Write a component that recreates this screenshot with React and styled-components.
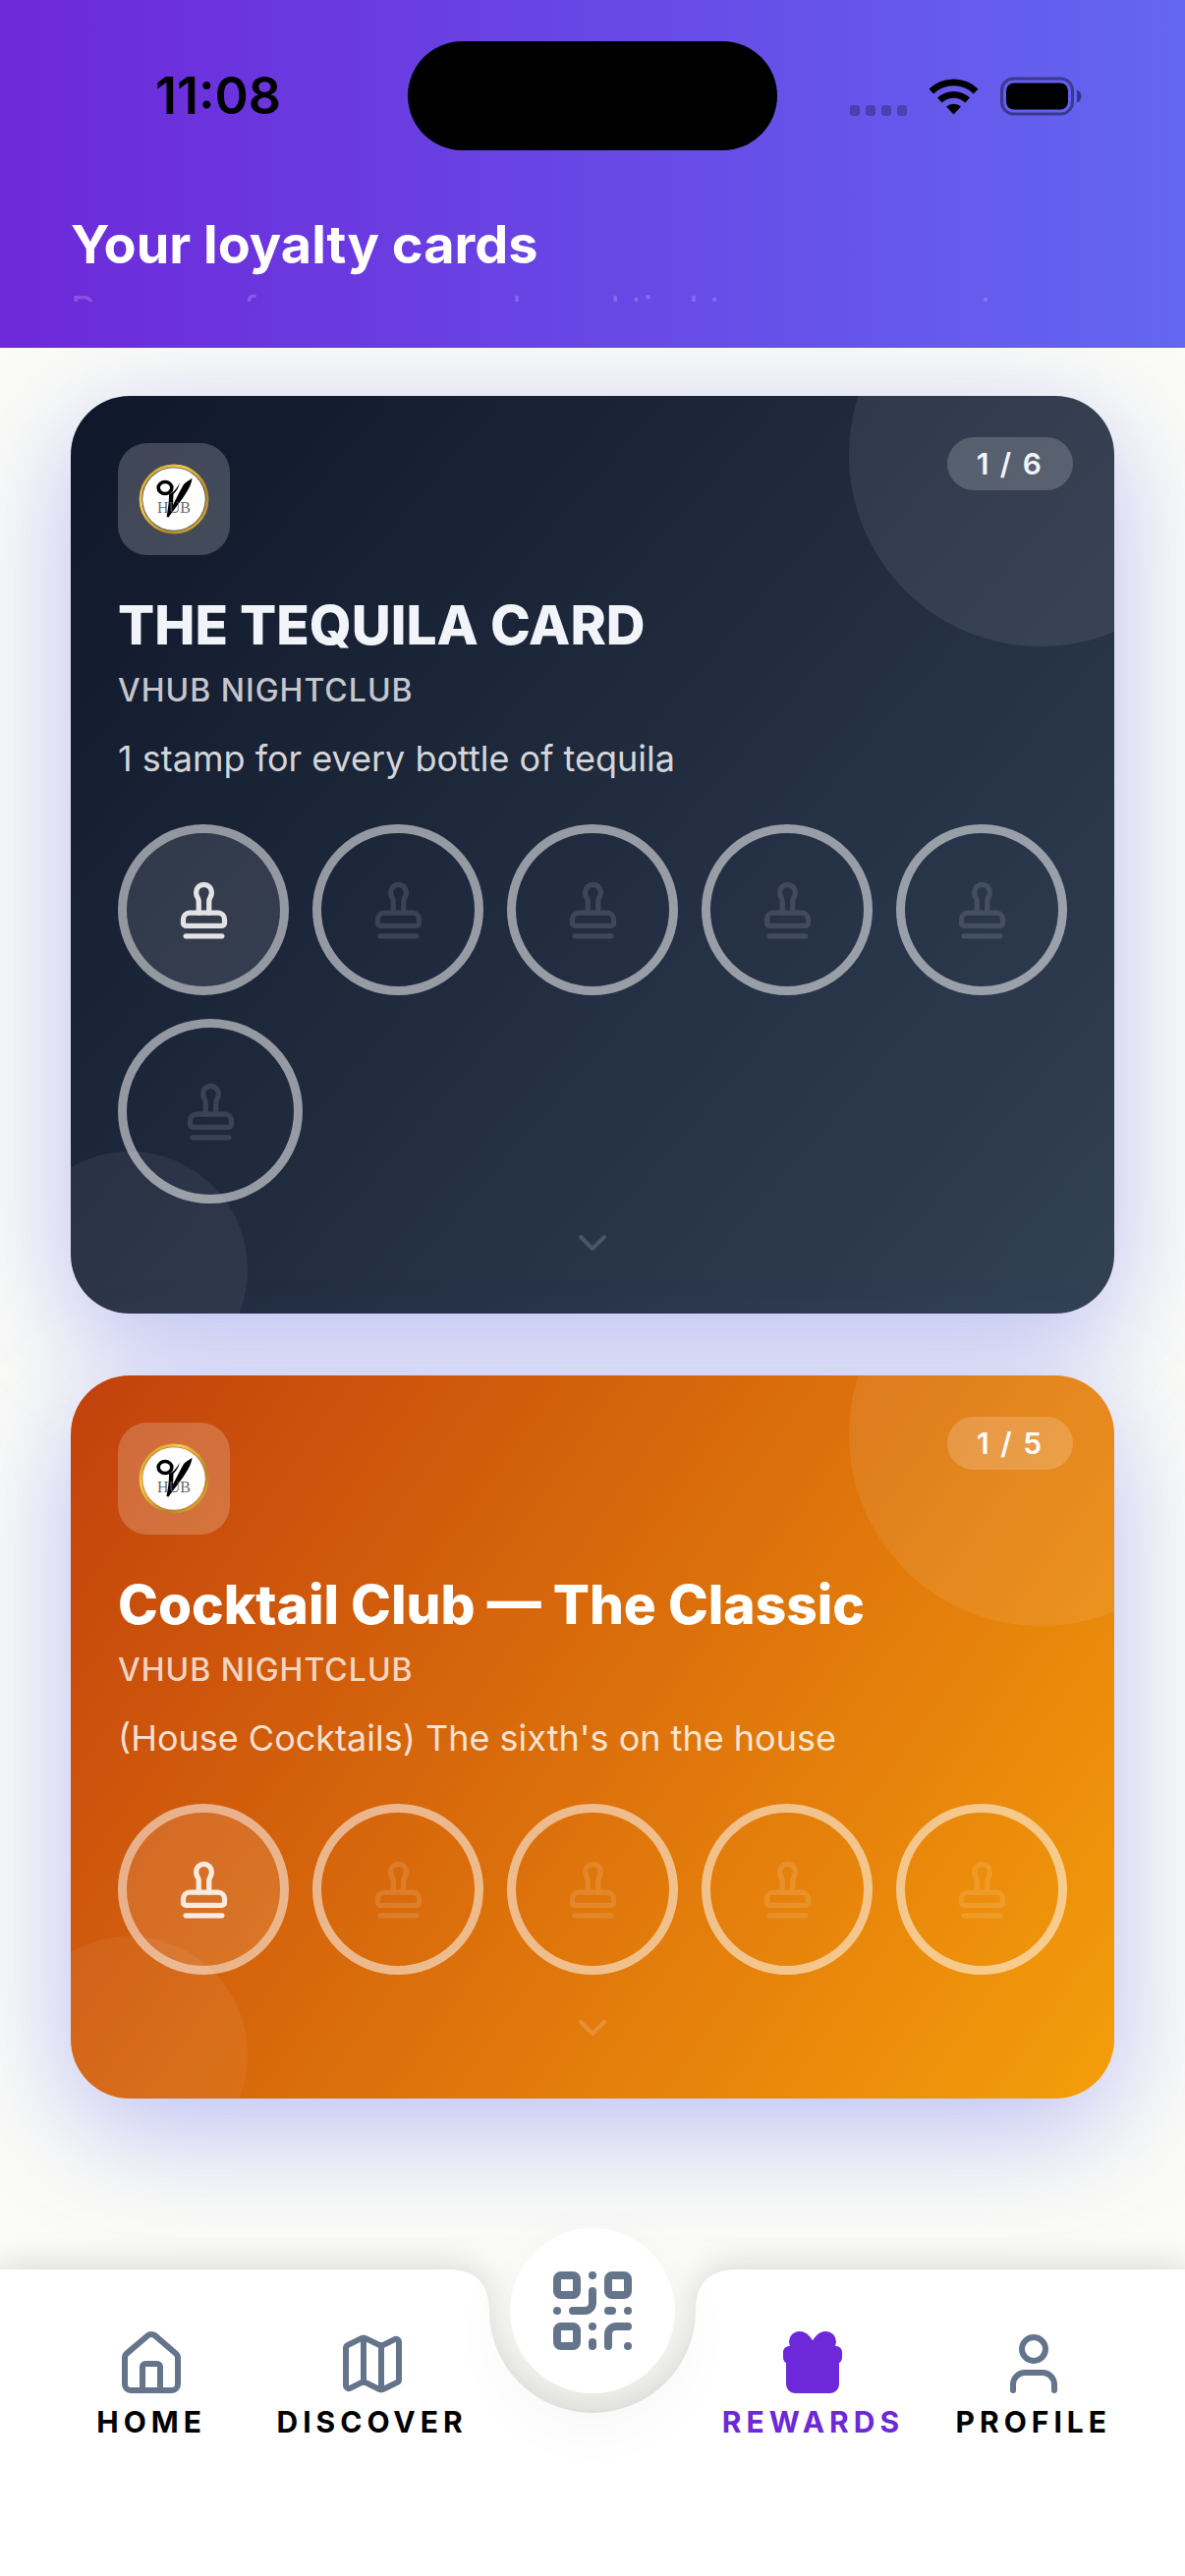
import React from "react";
import styled, { createGlobalStyle } from "styled-components";
import { House, Map, User, QrCode, Stamp, ChevronDown } from "lucide-react";

const GlobalStyle = createGlobalStyle`
  *, *::before, *::after { box-sizing: border-box; }
  body {
    margin: 0;
    background: #fbfcf7;
    font-family: Inter, "Liberation Sans", sans-serif;
    -webkit-font-smoothing: antialiased;
  }
  h1, h2, p { margin: 0; }
`;

const Screen = styled.div`
  min-height: 100vh;
  display: flex;
  flex-direction: column;
  overflow: hidden;
`;

const Header = styled.header`
  background: linear-gradient(90deg, #6d28d9, #6366f1);
  padding: 42px 72px 47px;
  position: relative;
  z-index: 1;
`;

const StatusBar = styled.div`
  display: grid;
  grid-template-columns: 1fr 376px 1fr;
  align-items: center;
  height: 111px;
`;

const Time = styled.time`
  padding-left: 86px;
  font-size: 52px;
  line-height: 60px;
  font-weight: 600;
  color: #000;
`;

const Island = styled.div`
  height: 111px;
  border-radius: 56px;
  background: #000;
`;

const StatusIcons = styled.div`
  display: flex;
  align-items: center;
  justify-content: flex-end;
  gap: 22px;
  padding-right: 33px;
`;

const Dots = styled.div`
  display: flex;
  gap: 6px;
  align-self: flex-end;
  i {
    width: 10px;
    height: 11px;
    border-radius: 3px;
    background: rgba(0, 0, 0, 0.25);
  }
`;

const PageTitle = styled.h1`
  margin-top: 64px;
  font-size: 54px;
  line-height: 64px;
  font-weight: 700;
  color: #fff;
`;

const Subtitle = styled.p`
  margin-top: 11px;
  height: 15px;
  overflow: hidden;
  white-space: nowrap;
  font-size: 39px;
  line-height: 48px;
  color: rgba(255, 255, 255, 0.2);
`;

const CardList = styled.main`
  flex: 1;
  display: flex;
  flex-direction: column;
  gap: 63px;
  padding: 49px 72px 174px;
`;

const Card = styled.article`
  position: relative;
  border-radius: 60px;
  padding: 48px;
  background: linear-gradient(${(p) => p.$angle}deg, ${(p) => p.$from}, ${(p) => p.$to});
  box-shadow: 0 30px 116px rgba(99, 102, 241, 0.42);
`;

const Decoration = styled.div`
  position: absolute;
  inset: 0;
  border-radius: inherit;
  overflow: hidden;
  &::before, &::after {
    content: "";
    position: absolute;
    border-radius: 50%;
  }
  &::before {
    top: -135px;
    right: -120px;
    width: 390px;
    height: 390px;
    background: rgba(255, 255, 255, 0.08);
  }
  &::after {
    left: -60px;
    bottom: -75px;
    width: 240px;
    height: 240px;
    background: rgba(255, 255, 255, 0.06);
  }
`;

const CardBody = styled.div`
  position: relative;
  display: flex;
  flex-direction: column;
`;

const LogoTile = styled.div`
  width: 114px;
  height: 114px;
  border-radius: 30px;
  background: rgba(255, 255, 255, 0.2);
  display: flex;
  align-items: center;
  justify-content: center;
`;

const Count = styled.span`
  position: absolute;
  top: 42px;
  right: 42px;
  height: 54px;
  padding: 0 30px;
  border-radius: 27px;
  background: rgba(255, 255, 255, 0.18);
  color: ${(p) => p.$ink};
  font-size: 30px;
  line-height: 54px;
  font-weight: 600;
  letter-spacing: 2px;
`;

const CardTitle = styled.h2`
  margin-top: 36px;
  font-size: 55px;
  line-height: 70px;
  font-weight: 800;
  color: ${(p) => p.$ink};
`;

const Venue = styled.p`
  margin-top: 12px;
  font-size: 32px;
  line-height: 40px;
  font-weight: 500;
  letter-spacing: 1px;
  color: rgba(255, 255, 255, 0.75);
`;

const Description = styled.p`
  margin-top: 26px;
  font-size: 36px;
  line-height: 46px;
  color: rgba(255, 255, 255, 0.82);
`;

const Stamps = styled.ul`
  list-style: none;
  margin: 44px 0 0;
  padding: 0;
  display: grid;
  grid-template-columns: repeat(5, minmax(0, 1fr));
  gap: 24px;
`;

const Slot = styled.li`
  aspect-ratio: 1;
  border-radius: 50%;
  border: 9px solid rgba(255, 255, 255, 0.53);
  display: flex;
  align-items: center;
  justify-content: center;
  color: #fff;
  background: ${(p) => (p.$filled ? "rgba(255,255,255,0.11)" : "transparent")};
  background-clip: padding-box;
  svg { opacity: ${(p) => (p.$filled ? 0.86 : 0.12)}; }
  &:nth-child(5n + 1):last-child {
    width: 188px;
    margin-bottom: -14px;
  }
`;

const Expand = styled.button`
  align-self: center;
  margin-top: 30px;
  padding: 0;
  border: 0;
  background: none;
  display: flex;
  color: #fff;
  svg { opacity: 0.16; }
`;

const TabBar = styled.nav`
  position: relative;
  height: 312px;
`;

const Backdrop = styled.div`
  position: absolute;
  inset: 0;
  display: flex;
  filter: drop-shadow(0 -6px 16px rgba(0, 0, 0, 0.13));
`;

const Flank = styled.div`
  flex: 1;
  background: #fff;
`;

const Center = styled.div`
  width: 294px;
  display: flex;
  flex-direction: column;
  margin: 0 -1px;
  &::after {
    content: "";
    flex: 1;
    margin-top: -1px;
    background: #fff;
  }
  svg { display: block; }
`;

const Tabs = styled.div`
  position: relative;
  display: grid;
  grid-template-columns: repeat(5, minmax(0, 1fr));
  padding: 0 42px;
`;

const Tab = styled.a`
  display: flex;
  flex-direction: column;
  align-items: center;
  gap: 5px;
  padding-top: 60px;
  text-decoration: none;
  color: ${(p) => (p.$active ? "#6d28d9" : "#000")};
  font-size: 30px;
  line-height: 36px;
  font-weight: 700;
  letter-spacing: 5px;
  svg { color: ${(p) => (p.$active ? "#6d28d9" : "#64748b")}; }
`;

const Scan = styled.button`
  justify-self: center;
  margin-top: -42px;
  width: 168px;
  height: 168px;
  padding: 0;
  border: 0;
  border-radius: 50%;
  background: #fff;
  color: #64748b;
  display: flex;
  align-items: center;
  justify-content: center;
  box-shadow: 0 24px 72px rgba(0, 0, 0, 0.05);
`;

function WifiGlyph() {
  return (
    <svg width="51" height="38" viewBox="0 0 51 38" aria-hidden="true">
      <path d="M0.5 11.5A36 36 0 0 1 50.500 11.500L45.800 16.500A29 29 0 0 0 5.200 16.500Z" />
      <path d="M9 20.500A24 24 0 0 1 42 20.500L37.300 25.500A17 17 0 0 0 13.700 25.500Z" />
      <path d="M18 29.500A11.500 11.500 0 0 1 33 29.500L25.500 37.500Z" />
    </svg>
  );
}

function BatteryGlyph() {
  return (
    <svg width="83" height="40" viewBox="0 0 83 40" aria-hidden="true">
      <rect x="1.500" y="2" width="72" height="36" rx="12" fill="none" stroke="#000" strokeOpacity="0.4" strokeWidth="3" />
      <rect x="6" y="6.500" width="63" height="27" rx="8" />
      <path d="M78 13.500a7 7 0 0 1 0 13Z" fillOpacity="0.45" />
    </svg>
  );
}

function GiftGlyph() {
  return (
    <svg width="72" height="72" viewBox="0 0 24 24" fill="currentColor" stroke="currentColor" strokeWidth="2" strokeLinecap="round" strokeLinejoin="round" aria-hidden="true">
      <path d="M20 11v8a2 2 0 0 1-2 2H6a2 2 0 0 1-2-2v-8" />
      <path d="M7.5 7a1 1 0 0 1 0-5A4.8 8 0 0 1 12 7a4.8 8 0 0 1 4.5-5 1 1 0 0 1 0 5" />
      <rect x="3" y="7" width="18" height="4" rx="1" />
    </svg>
  );
}

function VenueLogo({ id }) {
  return (
    <svg width="72" height="72" viewBox="0 0 72 72" role="img" aria-label="VHub">
      <defs>
        <linearGradient id={id} x1="0" y1="0" x2="1" y2="1">
          <stop offset="0" stopColor="#b98a22" />
          <stop offset="0.3" stopColor="#f6cd45" />
          <stop offset="0.7" stopColor="#b08426" />
          <stop offset="1" stopColor="#e9bd3a" />
        </linearGradient>
      </defs>
      <circle cx="36" cy="36" r="34" fill="none" stroke={`url(#${id})`} strokeWidth="2.800" />
      <circle cx="36" cy="36" r="31.800" fill="#fff" />
      <ellipse cx="27" cy="24.500" rx="6.800" ry="6" fill="none" stroke="#000" strokeWidth="3.600" />
      <path d="M31 31C36 29 39 25 42 19.500C40 27 37 29 35.500 31L35 42C38 36 42 28 46 21C49 18 52 17 54.500 14.500C54 22 49 29 45 35C40 42 35 48 30.500 54.500L28.500 54C30 46 31 40 31 31Z" />
      <text x="36" y="49.500" textAnchor="middle" fontFamily="Liberation Serif, serif" fontSize="16" fill="#555" fillOpacity="0.9">HUB</text>
    </svg>
  );
}

function LoyaltyCard({ id, title, venue, description, stamped, total, angle, from, to, ink }) {
  return (
    <Card $angle={angle} $from={from} $to={to}>
      <Decoration />
      <CardBody>
        <LogoTile>
          <VenueLogo id={`ring-${id}`} />
        </LogoTile>
        <CardTitle $ink={ink}>{title}</CardTitle>
        <Venue>{venue}</Venue>
        <Description>{description}</Description>
        <Stamps>
          {Array.from({ length: total }, (_, i) => (
            <Slot key={i} $filled={i < stamped}>
              <Stamp size={63} />
            </Slot>
          ))}
        </Stamps>
        <Expand type="button" aria-label={`Show details for ${title}`}>
          <ChevronDown size={48} />
        </Expand>
      </CardBody>
      <Count $ink={ink}>{stamped} / {total}</Count>
    </Card>
  );
}

const cards = [
  {
    id: "tequila",
    title: "THE TEQUILA CARD",
    venue: "VHUB NIGHTCLUB",
    description: "1 stamp for every bottle of tequila",
    stamped: 1,
    total: 6,
    angle: 131,
    from: "#0f172a",
    to: "#334155",
    ink: "#f1f5f9",
  },
  {
    id: "cocktail",
    title: "Cocktail Club — The Classic",
    venue: "VHUB NIGHTCLUB",
    description: "(House Cocktails) The sixth's on the house",
    stamped: 1,
    total: 5,
    angle: 125,
    from: "#c2410c",
    to: "#f59e0b",
    ink: "#ffffff",
  },
];

export default function App() {
  return (
    <Screen>
      <GlobalStyle />
      <Header>
        <StatusBar>
          <Time>11:08</Time>
          <Island />
          <StatusIcons>
            <Dots><i /><i /><i /><i /></Dots>
            <WifiGlyph />
            <BatteryGlyph />
          </StatusIcons>
        </StatusBar>
        <PageTitle>Your loyalty cards</PageTitle>
        <Subtitle>Progress for your rewards and tied to your account</Subtitle>
      </Header>
      <CardList>
        {cards.map((card) => (
          <LoyaltyCard key={card.id} {...card} />
        ))}
      </CardList>
      <TabBar>
        <Backdrop>
          <Flank />
          <Center>
            <svg width="294" height="148" viewBox="0 0 294 148" aria-hidden="true">
              <path d="M0 0C28 0 42 14 42 42A105 104 0 0 0 252 42C252 14 266 0 294 0V148H0Z" fill="#fff" />
            </svg>
          </Center>
          <Flank />
        </Backdrop>
        <Tabs>
          <Tab href="#home"><House size={72} />HOME</Tab>
          <Tab href="#discover"><Map size={72} />DISCOVER</Tab>
          <Scan type="button" aria-label="Scan code"><QrCode size={96} /></Scan>
          <Tab href="#rewards" $active aria-current="page"><GiftGlyph />REWARDS</Tab>
          <Tab href="#profile"><User size={72} />PROFILE</Tab>
        </Tabs>
      </TabBar>
    </Screen>
  );
}
